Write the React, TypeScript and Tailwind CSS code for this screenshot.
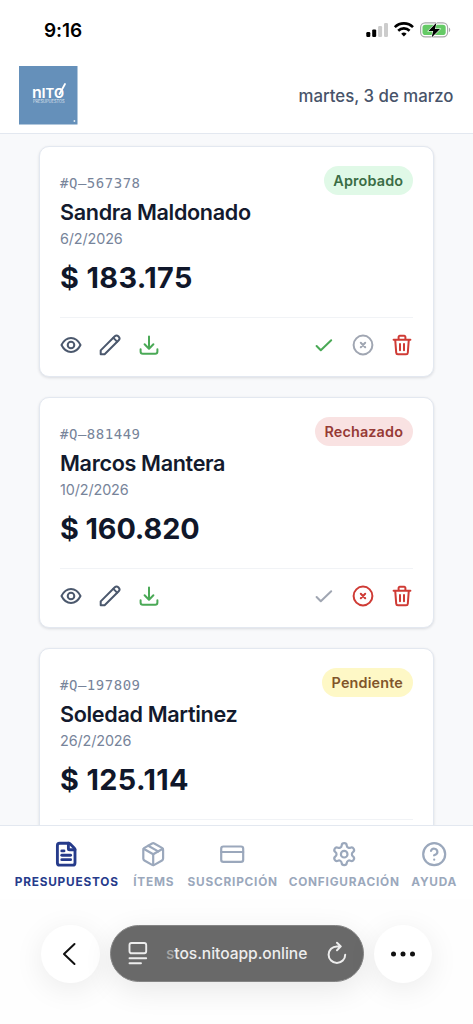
import type { ReactNode } from 'react';
import { CircleHelp, CreditCard, FileText, Package, Settings } from 'lucide-react';

type Status = 'Aprobado' | 'Rechazado' | 'Pendiente';

interface Quote {
  id: string;
  client: string;
  date: string;
  total: string;
  totalTracking: string;
  status: Status;
}

const quotes: Quote[] = [
  { id: '#Q–567378', client: 'Sandra Maldonado', date: '6/2/2026', total: '$ 183.175', totalTracking: 'tracking-[0.4px]', status: 'Aprobado' },
  { id: '#Q–881449', client: 'Marcos Mantera', date: '10/2/2026', total: '$ 160.820', totalTracking: 'tracking-[-0.1px]', status: 'Rechazado' },
  { id: '#Q–197809', client: 'Soledad Martinez', date: '26/2/2026', total: '$ 125.114', totalTracking: 'tracking-[0.4px]', status: 'Pendiente' },
];

const badgeStyles: Record<Status, string> = {
  Aprobado: 'w-[89.5px] bg-[#e0f9e7] text-[#3b6d45]',
  Rechazado: 'w-[98.5px] bg-[#f9e2e2] text-[#963a35]',
  Pendiente: 'w-[91.5px] bg-[#fef8c6] text-[#81552a]',
};

function StatusBar() {
  return (
    <div className="flex h-[60px] shrink-0 items-center justify-between pr-[22px] pl-[44px]">
      <span className="pt-[2px] text-[19px] font-semibold tracking-[-0.1px] text-black">9:16</span>
      <svg width="86" height="18" viewBox="0 0 86 18">
        <rect x="1.3" y="11" width="4" height="5" rx="1.2" fill="#000" />
        <rect x="7.2" y="8.4" width="4" height="7.6" rx="1.2" fill="#000" />
        <rect x="13.1" y="5" width="4" height="11" rx="1.2" fill="#ccc" />
        <rect x="19" y="2" width="4" height="14" rx="1.2" fill="#ccc" />
        <g fill="none" stroke="#000" strokeWidth="2.6">
          <path d="M29.8 6.1a13 13 0 0 1 18.2 0" />
          <path d="M33.2 9.7a8.2 8.2 0 0 1 11.4 0" />
        </g>
        <path d="M38.9 15.6l-2.7-2.9a3.9 3.9 0 0 1 5.4 0z" fill="#000" />
        <rect x="55.6" y="1.9" width="27" height="14" rx="4.6" fill="none" stroke="#a9a9ab" strokeWidth="1.2" />
        <rect x="57.5" y="3.8" width="23.2" height="10.2" rx="2.8" fill="#65ca66" />
        <path d="M84 6.8c1.6.5 1.6 3.8 0 4.3z" fill="#a9a9ab" />
        <path d="M71.4 1.8L63.4 10h4.8l-1.6 6.4L75 8h-5z" fill="#000" stroke="#fff" strokeWidth="1.1" paintOrder="stroke" />
      </svg>
    </div>
  );
}

function Logo() {
  return (
    <svg width="58.5" height="58.5" viewBox="0 0 58.5 58.5">
      <rect width="58.5" height="58.5" fill="#6590ba" />
      <text y="31.600" fill="#fff" fontFamily="Inter, sans-serif" fontSize="13" fontWeight="700">
        <tspan x="13" fontSize="16" fontWeight="600">n</tspan>
        <tspan x="22.800">I</tspan>
        <tspan x="26.600">T</tspan>
        <tspan x="35">O</tspan>
      </text>
      <text x="14" y="37.300" fill="#fff" fontFamily="Inter, sans-serif" fontSize="4.4" textLength="31.5" lengthAdjust="spacingAndGlyphs" opacity="0.75">
        PRESUPUESTOS
      </text>
      <path d="M40.500 28L46 18" stroke="#fff" strokeWidth="1.8" strokeLinecap="round" />
      <circle cx="55.400" cy="55" r="0.9" fill="#e4edf5" />
    </svg>
  );
}

function Icon({ className, children }: { className: string; children: ReactNode }) {
  return (
    <svg
      viewBox="0 0 22 22"
      fill="none"
      stroke="currentColor"
      strokeWidth="2"
      strokeLinecap="round"
      strokeLinejoin="round"
      className={`h-[22px] w-[22px] ${className}`}
    >
      {children}
    </svg>
  );
}

function QuoteCard({ quote }: { quote: Quote }) {
  const approved = quote.status === 'Aprobado';
  const rejected = quote.status === 'Rechazado';

  return (
    <article className="h-[231.2px] shrink-0 rounded-[10px] border border-[#e3e8f0] bg-white px-5 pt-[19px] shadow-[0_1px_3px_rgba(15,23,42,0.13)]">
      <div className="flex h-[151.5px] items-start justify-between border-b border-[#f1f3f6]">
        <div className="pt-[7px] whitespace-nowrap">
          <p className="font-['DejaVu_Sans_Mono',monospace] text-[14px] leading-[20px] tracking-[0.52px] text-[#77849a]">{quote.id}</p>
          <h2 className="mt-[4px] text-[21.6px] leading-[30px] font-semibold tracking-[-0.34px] text-[#131a2d]">{quote.client}</h2>
          <p className="mt-[2px] text-[14.4px] leading-[20px] tracking-[-0.12px] text-[#77849a]">{quote.date}</p>
          <p className={`mt-[11px] text-[28.8px] leading-[36px] font-bold text-[#10172a] ${quote.totalTracking}`}>{quote.total}</p>
        </div>
        <span className={`flex h-[29px] items-center justify-center rounded-full text-[14.4px] font-semibold tracking-[0.15px] ${badgeStyles[quote.status]}`}>
          {quote.status}
        </span>
      </div>
      <div className="flex items-center justify-between pt-[16px]">
        <div className="flex gap-[17px]">
          <Icon className="text-[#4b586d]">
            <path d="M1.500 11C3.700 6.600 7 4 11 4s7.300 2.600 9.500 7c-2.200 4.400-5.500 7-9.500 7s-7.300-2.600-9.500-7z" />
            <circle cx="11" cy="11" r="3.300" />
          </Icon>
          <Icon className="text-[#4b586d]">
            <path d="M1.700 20.300v-3.900L15.800 2.300a2.500 2.500 0 0 1 3.500 0l.4.400a2.500 2.500 0 0 1 0 3.500L5.600 20.300z" />
            <path d="M14.400 3.900l3.700 3.700" />
          </Icon>
          <Icon className="text-[#4aa956]">
            <path d="M11 2.600v12M6.600 10.300l4.400 4.400 4.400-4.400M2.600 15.300v2.200a2.200 2.200 0 0 0 2.200 2.200h12.400a2.200 2.200 0 0 0 2.200-2.200v-2.200" />
          </Icon>
        </div>
        <div className="flex gap-[17px]">
          <Icon className={rejected ? 'text-[#a0a6b2]' : 'text-[#4aa956]'}>
            <path d="M3.600 12l4.200 4.300L18.200 6.200" />
          </Icon>
          <Icon className={approved ? 'text-[#a0a6b2]' : 'text-[#cf3b35]'}>
            <circle cx="11" cy="11" r="9.400" />
            <path d="M8.800 8.800l4.400 4.400M13.200 8.800l-4.400 4.400" />
          </Icon>
          <Icon className="text-[#cf3b35]">
            <path d="M2.600 5.700h16.800M4.200 5.700l1 13a1.700 1.700 0 0 0 1.700 1.600h8.200a1.700 1.700 0 0 0 1.700-1.600l1-13M7.600 5.500V3a1.200 1.200 0 0 1 1.200-1.200h4.400A1.200 1.200 0 0 1 14.400 3v2.500M9 10v6.300M13 10v6.300" />
          </Icon>
        </div>
      </div>
    </article>
  );
}

const navItems = [
  { label: 'PRESUPUESTOS', icon: FileText, box: 'w-[105px]', active: true },
  { label: 'ÍTEMS', icon: Package, box: 'ml-[13.5px] w-[42px]', active: false },
  { label: 'SUSCRIPCIÓN', icon: CreditCard, box: 'ml-[12px] w-[92px]', active: false },
  { label: 'CONFIGURACIÓN', icon: Settings, box: 'ml-[9.5px] w-[112px]', active: false },
  { label: 'AYUDA', icon: CircleHelp, box: 'ml-[11px] w-[46px]', active: false },
];

function BottomNav() {
  return (
    <nav className="flex h-[74px] shrink-0 border-t border-[#e3e8f0] bg-white pt-[15px] pl-[14.2px]">
      {navItems.map(({ label, icon: NavIcon, box, active }) => (
        <div
          key={label}
          className={`flex flex-col items-center whitespace-nowrap ${box} ${active ? 'text-[#263b8b]' : 'text-[#9ba8bc]'}`}
        >
          <NavIcon size={26.4} strokeWidth={active ? 2.6 : 2} />
          <span className="mt-[6.2px] text-[11.8px] leading-[16px] font-bold tracking-[0.8px]">{label}</span>
        </div>
      ))}
    </nav>
  );
}

function BrowserBar() {
  const round =
    'flex h-[58.5px] w-[58.5px] items-center justify-center rounded-full bg-white shadow-[0_6px_30px_rgba(0,0,0,0.08)]';

  return (
    <div className="flex h-[125px] shrink-0 items-start justify-center gap-[10px] bg-[#fefefe] pt-[25.5px]">
      <div className={round}>
        <svg className="mr-[3px]" width="16" height="24" viewBox="0 0 16 24" fill="none" stroke="#111" strokeWidth="2" strokeLinecap="round" strokeLinejoin="round">
          <path d="M13.500 2L3 12l10.500 10" />
        </svg>
      </div>
      <div className="flex h-[57.5px] w-[254px] items-center rounded-full border border-[#858585] bg-[#696969] pr-[16px] pl-[17.5px] text-[#ededed] shadow-[0_8px_30px_rgba(0,0,0,0.09)]">
        <svg width="20" height="24" viewBox="0 0 20 24" fill="none" stroke="currentColor" strokeWidth="1.9" strokeLinecap="round">
          <rect x="1.500" y="2" width="16.700" height="10.300" rx="2" />
          <path d="M1.500 17.200h16.700M1.500 22.200h11.500" />
        </svg>
        <span className="ml-[18px] pt-px text-[15.6px] font-medium tracking-[-0.05px] whitespace-nowrap">
          <span className="text-[#a5a5a5]">s</span>tos.nitoapp.online
        </span>
        <svg className="ml-auto" width="20" height="24" viewBox="0 0 20 24" fill="none" stroke="currentColor" strokeWidth="2" strokeLinecap="round" strokeLinejoin="round">
          <path d="M18.200 13.700A8.300 8.300 0 1 1 9.900 5.400h3.600M10 1.700l3.800 3.700L10 9.200" />
        </svg>
      </div>
      <div className={round}>
        <svg width="26" height="6" viewBox="0 0 26 6" fill="#111">
          <circle cx="3.500" cy="3" r="2.500" />
          <circle cx="13" cy="3" r="2.500" />
          <circle cx="22.500" cy="3" r="2.500" />
        </svg>
      </div>
    </div>
  );
}

export default function App() {
  return (
    <div className="flex h-[1024px] w-[473px] flex-col overflow-hidden bg-white font-['Inter',sans-serif]">
      <StatusBar />
      <header className="flex h-[74px] shrink-0 items-center justify-between border-b border-[#e3e8f0] bg-white pr-[19.5px] pb-[2px] pl-[19px]">
        <Logo />
        <span className="pt-[2px] text-[16.8px] font-medium text-[#475369]">martes, 3 de marzo</span>
      </header>
      <main className="flex h-[691px] shrink-0 flex-col gap-5 overflow-hidden bg-[#f8f9fb] px-[39px] pt-[12px]">
        {quotes.map((quote) => (
          <QuoteCard key={quote.id} quote={quote} />
        ))}
      </main>
      <BottomNav />
      <BrowserBar />
    </div>
  );
}
